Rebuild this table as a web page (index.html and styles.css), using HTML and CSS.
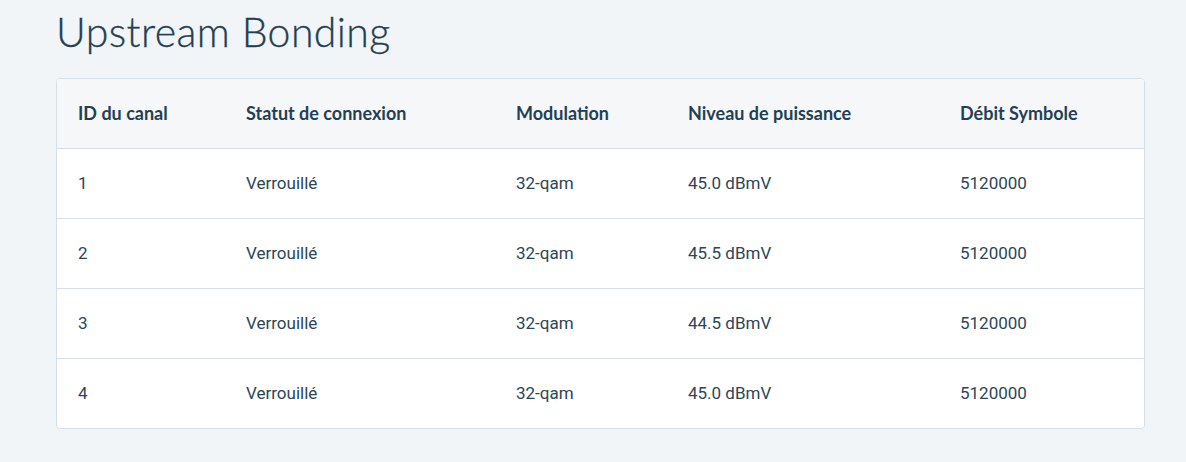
FILE: index.html
```html
<!DOCTYPE html>
<html lang="fr">
<head>
<meta charset="utf-8">
<title>Upstream Bonding</title>
<link rel="stylesheet" href="styles.css">
</head>
<body>
<main class="page">
  <h1 class="title">Upstream Bonding</h1>
  <div class="card">
    <table class="grid">
      <thead>
        <tr>
          <th class="c1">ID du canal</th>
          <th class="c2">Statut de connexion</th>
          <th class="c3">Modulation</th>
          <th class="c4">Niveau de puissance</th>
          <th class="c5">Débit Symbole</th>
        </tr>
      </thead>
      <tbody>
        <tr><td>1</td><td>Verrouillé</td><td>32-qam</td><td>45.0 dBmV</td><td>5120000</td></tr>
        <tr><td>2</td><td>Verrouillé</td><td>32-qam</td><td>45.5 dBmV</td><td>5120000</td></tr>
        <tr><td>3</td><td>Verrouillé</td><td>32-qam</td><td>44.5 dBmV</td><td>5120000</td></tr>
        <tr><td>4</td><td>Verrouillé</td><td>32-qam</td><td>45.0 dBmV</td><td>5120000</td></tr>
      </tbody>
    </table>
  </div>
</main>
</body>
</html>
```

FILE: styles.css
```css
html, body {
  margin: 0;
  padding: 0;
  background: #f1f5f8;
}
body {
  font-family: Roboto, "Liberation Sans", sans-serif;
  color: #2c4657;
}
.page {
  padding: 7px 41px 34px 56px;
}
.title {
  margin: 0 0 22px 0;
  font-family: Lato, "Open Sans", sans-serif;
  font-weight: 300;
  font-size: 41px;
  line-height: 49px;
  color: #243f52;
  letter-spacing: 0.4px;
  -webkit-text-stroke: 0.3px #243f52;
}
.card {
  background: #fff;
  border: 1px solid #d4dfe7;
  border-radius: 4px;
  overflow: hidden;
}
.grid {
  width: 100%;
  border-collapse: collapse;
  table-layout: fixed;
}
.grid th, .grid td {
  box-sizing: border-box;
  text-align: left;
  padding: 0 0 0 21px;
  vertical-align: middle;
}
.grid th {
  background: #f6f7f9;
  font-family: Lato, "Open Sans", sans-serif;
  font-weight: 700;
  font-size: 18px;
  color: #243f52;
  height: 69px;
}
.grid td {
  height: 70px;
  font-size: 17px;
  color: #2c4657;
  border-top: 1px solid #d4dfe7;
}
.c1 { width: 168px; }
.c2 { width: 270px; }
.c3 { width: 172px; }
.c4 { width: 272px; }
```
